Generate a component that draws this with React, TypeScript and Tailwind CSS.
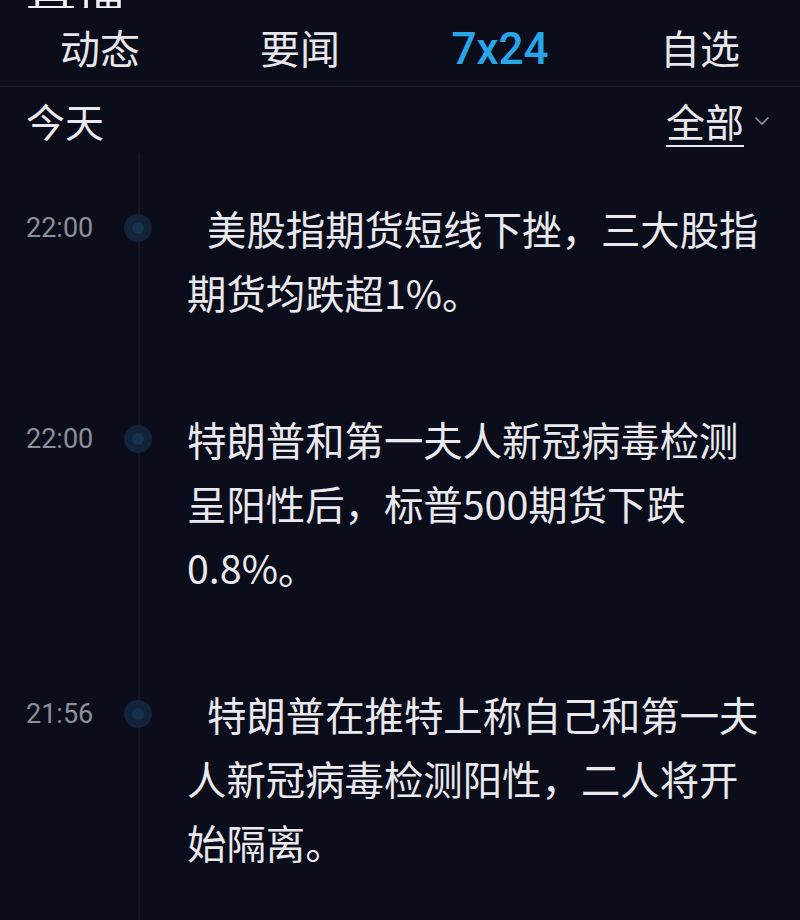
const items = [
  { time: '22:00', indent: true, text: '美股指期货短线下挫，三大股指期货均跌超1%。' },
  { time: '22:00', indent: false, text: '特朗普和第一夫人新冠病毒检测呈阳性后，标普500期货下跌0.8%。' },
  { time: '21:56', indent: true, text: '特朗普在推特上称自己和第一夫人新冠病毒检测阳性，二人将开始隔离。' },
];

const tabs = ['动态', '要闻', '7x24', '自选'];

export default function App() {
  return (
    <div
      className="w-[800px] h-[920px] overflow-hidden bg-[#0c0d1a] text-[#e9e9ef] flex flex-col"
      style={{ fontFamily: '"Noto Sans CJK SC", "Noto Sans", sans-serif' }}
    >
      {/* title row, scrolled off the top */}
      <div className="h-[8px] shrink-0 overflow-hidden relative">
        <div className="absolute left-[26px] bottom-[-2px] text-[50px] leading-[50px] text-[#f2f2f6]">
          直播
        </div>
      </div>

      <div className="grid grid-cols-4 h-[79px] shrink-0 items-center border-b border-[#1c1e2c]">
        {tabs.map((t) =>
          t === '7x24' ? (
            <div
              key={t}
              className="text-center text-[44px] leading-none font-medium text-[#27a6ea] pt-[4px]"
              style={{ fontFamily: 'Roboto, "Noto Sans", sans-serif' }}
            >
              {t}
            </div>
          ) : (
            <div key={t} className="text-center text-[40px] leading-none text-[#e6e6ec]">
              {t}
            </div>
          )
        )}
      </div>

      <div className="flex items-center justify-between h-[66px] shrink-0 pl-[26px] pr-[30px]">
        <span className="text-[39px] leading-none">今天</span>
        <div className="flex items-center gap-[10px]">
          <span className="text-[39px] leading-none underline underline-offset-[8px] decoration-[2px]">
            全部
          </span>
          <svg width="16" height="10" viewBox="0 0 16 10" className="mt-[2px]">
            <path d="M1.5 1.5 L8 8 L14.5 1.5" fill="none" stroke="#8d8f99" strokeWidth="1.6" />
          </svg>
        </div>
      </div>

      <div className="relative flex-1 pt-[43px]">
        <div className="absolute left-[138px] top-0 bottom-0 w-[2px] bg-[#141624]" />
        {items.map((it, i) => (
          <div key={i} className="flex mb-[83px]">
            <div
              className="w-[112px] pl-[26px] h-[64px] flex items-center text-[27px] text-[#8c8e98]"
              style={{ fontFamily: 'Roboto, "Noto Sans", sans-serif' }}
            >
              {it.time}
            </div>
            <div className="w-[52px] h-[64px] flex items-center justify-center relative">
              <div className="w-[28px] h-[28px] rounded-full bg-[#13233a] flex items-center justify-center">
                <div className="w-[12px] h-[12px] rounded-full bg-[#18314d]" />
              </div>
            </div>
            <div className="w-[582px] ml-[23px] text-[39.4px] leading-[64px]">
              {it.indent && <span className="inline-block w-[20px]" />}
              {it.text}
            </div>
          </div>
        ))}
      </div>
    </div>
  );
}
